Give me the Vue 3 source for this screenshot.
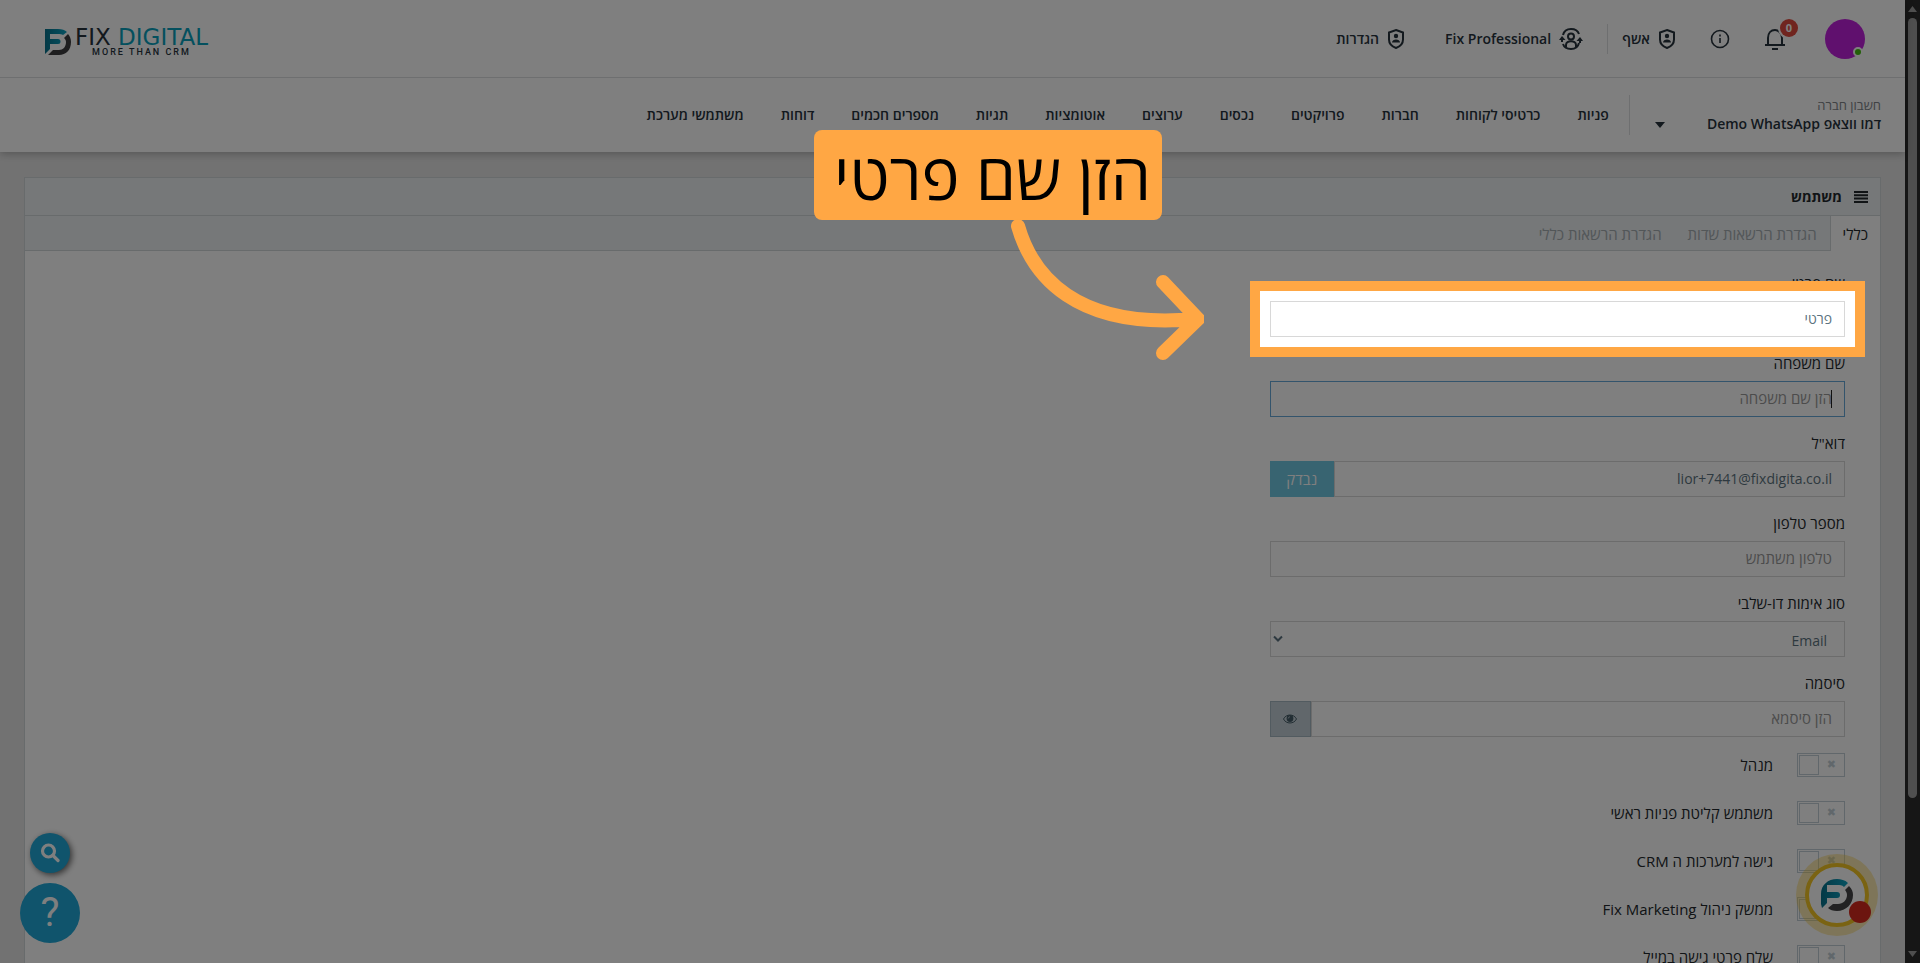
<template>
  <div class="window" dir="rtl">
    <div class="scrollbar">
      <svg width="9" height="6" viewBox="0 0 9 6"><path d="M4.500 0L9 6H0z" fill="currentColor" /></svg>
      <span class="thumb"></span>
      <svg class="down" width="9" height="6" viewBox="0 0 9 6"><path d="M0 0h9L4.500 6z" fill="currentColor" /></svg>
    </div>

    <div class="page">
      <header class="topbar">
        <div class="top-row">
          <div class="top-actions">
            <button class="avatar" aria-label="פרופיל"><span class="status"></span></button>
            <button class="icon-btn bell" aria-label="התראות">
              <svg width="22" height="24" viewBox="0 0 22 24" fill="none" stroke="currentColor" stroke-width="2">
                <path d="M1 18h20M4 18v-7c0-5 3-8 7-8 3 0 7 3 7 8v7M8 22h6" />
              </svg>
              <span class="count">0</span>
            </button>
            <button class="icon-btn info" aria-label="מידע">
              <svg width="20" height="20" viewBox="0 0 20 20" fill="none" stroke="currentColor" stroke-width="1.600">
                <circle cx="10" cy="10" r="8.500" />
                <path d="M10 9v5M10 5.500v2" />
              </svg>
            </button>
            <a class="top-link wizard" href="#">
              <svg class="shield" viewBox="0 0 18 22"><path class="line" d="M9 2l7 2.500v7c0 4-3 7-7 8.500-4-1.500-7-4.500-7-8.500v-7z" /><circle cx="9" cy="8" r="2.200" /><path d="M5 14.500c0-4 8-4 8 0z" /></svg>
              אשף
            </a>
            <span class="divider"></span>
            <a class="top-link pro" href="#">
              <svg width="24" height="22" viewBox="0 0 24 22" fill="none" stroke="currentColor" stroke-width="2">
                <path d="M4 7c1-4 4-6 8-6 4 0 7 2 8 5M20 15c-1 4-4 6-8 6-4 0-7-2-8-5" />
                <circle cx="12" cy="8.500" r="3" />
                <path d="M7 19v-2c0-5 10-5 10 0v2" />
                <path d="M0 12l3-4 3.500 4zM17.500 13l3.500-4 3 4z" fill="currentColor" stroke="none" />
                <path d="M3 11v3M21 11v4" />
              </svg>
              Fix Professional
            </a>
            <a class="top-link" href="#">
              <svg class="shield" viewBox="0 0 18 22"><path class="line" d="M9 2l7 2.500v7c0 4-3 7-7 8.500-4-1.500-7-4.500-7-8.500v-7z" /><circle cx="9" cy="8" r="2.200" /><path d="M5 14.500c0-4 8-4 8 0z" /></svg>
              הגדרות
            </a>
          </div>
          <a class="logo" href="#" dir="ltr">
            <svg width="26" height="26" viewBox="0 0 26 26">
              <defs>
                <linearGradient id="teal" x1="0" x2="1"><stop offset="0" stop-color="#08728c" /><stop offset="1" stop-color="#0da5c4" /></linearGradient>
              </defs>
              <path fill="url(#teal)" d="M0 0h13c4 0 7 1 9 3l-4 3c-1-1-3-1-5-1H5v5h8a2.500 2.500 0 0 1 0 5H5v5l-5 5z" />
              <path fill="#3c3c3e" d="M23 5c2 2 3 5 3 8 0 8-5 13-12 13H3l5-5h6c4 0 7-3 7-8 0-2-1-3-2-4z" />
            </svg>
            <span class="logo-text">
              <span class="logo-name">FIX <b>DIGITAL</b></span>
              <span class="logo-tag">MORE THAN CRM</span>
            </span>
          </a>
        </div>
        <div class="nav-row">
          <button class="account">
            <span class="account-text">
              <small>חשבון חברה</small>
              <span>דמו ווצאפ Demo WhatsApp</span>
            </span>
            <svg width="10" height="6" viewBox="0 0 10 6"><path d="M0 0h10L5 6z" fill="currentColor" /></svg>
          </button>
          <nav>
            <a v-for="item in navItems" :key="item" href="#">{{ item }}</a>
          </nav>
        </div>
      </header>

      <main class="card">
        <div class="card-header">
          <svg width="14" height="12" viewBox="0 0 14 12"><path d="M0 1h14M0 4.300h14M0 7.600h14M0 11h14" stroke="currentColor" stroke-width="2" /></svg>
          <h1>משתמש</h1>
        </div>
        <div class="tabs">
          <button v-for="tab in tabs" :key="tab" :class="{ active: tab === activeTab }" @click="activeTab = tab">{{ tab }}</button>
        </div>
        <form class="card-body" @submit.prevent>
          <div class="form-group">
            <label for="first">שם פרטי</label>
            <div class="control">
              <input id="first" v-model="form.first" type="text">
              <div class="spotlight"></div>
              <div class="callout">הזן שם פרטי</div>
              <svg class="arrow" width="200" height="150" viewBox="0 0 200 150">
                <path d="M14 14C28 63 71 118 191 107M159 70l35 37-35 34" />
              </svg>
            </div>
          </div>
          <div class="form-group">
            <label for="last">שם משפחה</label>
            <div class="control focused">
              <input id="last" v-model="form.last" type="text" placeholder="הזן שם משפחה">
              <span class="cursor"></span>
            </div>
          </div>
          <div class="form-group">
            <label for="email">דוא"ל</label>
            <div class="control">
              <input id="email" v-model="form.email" type="text">
              <button class="check" type="button">נבדק</button>
            </div>
          </div>
          <div class="form-group">
            <label for="phone">מספר טלפון</label>
            <div class="control">
              <input id="phone" v-model="form.phone" type="text" placeholder="טלפון משתמש">
            </div>
          </div>
          <div class="form-group">
            <label for="auth">סוג אימות דו-שלבי</label>
            <div class="control">
              <select id="auth" v-model="form.auth">
                <option>Email</option>
              </select>
              <svg class="chevron" width="10" height="8" viewBox="0 0 10 8"><path d="M1 1.500l4 4 4-4" fill="none" stroke="currentColor" stroke-width="2" /></svg>
            </div>
          </div>
          <div class="form-group">
            <label for="password">סיסמה</label>
            <div class="control">
              <input id="password" v-model="form.password" type="password" placeholder="הזן סיסמא">
              <button class="eye" type="button" aria-label="הצג סיסמה">
                <svg width="14" height="10" viewBox="0 0 14 10"><path d="M.5 5C3-.3 11-.3 13.500 5 11 10.300 3 10.300.5 5z" fill="none" stroke="currentColor" /><circle cx="7" cy="4.500" r="3.400" fill="currentColor" /><path d="M5.200 4.500A2 2 0 0 1 7 2.700" fill="none" stroke="#c2cfd6" stroke-width=".8" /></svg>
              </button>
            </div>
          </div>
          <label v-for="item in switches" :key="item.label" class="switch-row">
            <input v-model="item.on" type="checkbox">
            <span class="switch">
              <span class="mark">✖</span>
              <span class="handle"></span>
            </span>
            {{ item.label }}
          </label>
        </form>
      </main>

      <button class="fab search" aria-label="חיפוש">
        <svg width="20" height="20" viewBox="0 0 20 20" fill="none" stroke="currentColor" stroke-width="3.200"><circle cx="8.500" cy="8" r="6" /><path d="M13 12.500l5 5" stroke-linecap="round" /></svg>
      </button>
      <button class="fab help">?</button>
      <button class="chat" aria-label="צ'אט">
        <svg width="34" height="34" viewBox="0 0 34 34">
          <path fill="url(#teal)" d="M1 26V16C1 7 8 1 17 1c4 0 8 1 11 4l-4 4c-2-2-4-2-7-2H7v7h10a3 3 0 0 1 0 6H7v5l-5 5z" />
          <path fill="#444446" d="M29 8c3 3 4 6 4 9 0 9-7 16-16 16-4 0-7-1-9-3l5-4h5c5 0 9-4 9-9 0-2-1-4-2-5z" />
        </svg>
        <span class="dot"></span>
      </button>
    </div>
  </div>
</template>

<script setup>
import { reactive, ref } from 'vue'

const navItems = [
  'פניות', 'כרטיסי לקוחות', 'חברות', 'פרויקטים', 'נכסים', 'ערוצים',
  'אוטומציות', 'תגיות', 'מספרים חכמים', 'דוחות', 'משתמשי מערכת'
]

const tabs = ['כללי', 'הגדרת הרשאות שדות', 'הגדרת הרשאות כללי']
const activeTab = ref('כללי')

const form = reactive({
  first: 'פרטי',
  last: '',
  email: 'lior+7441@fixdigita.co.il',
  phone: '',
  auth: 'Email',
  password: ''
})

const switches = reactive([
  { label: 'מנהל', on: false },
  { label: 'משתמש קליטת פניות ראשי', on: false },
  { label: 'גישה למערכות ה CRM', on: false },
  { label: 'ממשק ניהול Fix Marketing', on: false },
  { label: 'שלח פרטי גישה במייל', on: false }
])
</script>

<style>
body {
  margin: 0;
  overflow: hidden;
}
</style>

<style scoped>
* {
  box-sizing: border-box;
}

.window {
  position: relative;
  display: flex;
  height: 100vh;
  overflow: hidden;
  background: #e5e5e5;
  color: #23282c;
  font: 15px/20px "Open Sans", "Noto Sans", sans-serif;
}

button {
  padding: 0;
  border: 0;
  background: none;
  color: inherit;
  font: inherit;
  cursor: pointer;
}

a {
  color: inherit;
  text-decoration: none;
}

svg {
  display: block;
  flex: none;
}

.page {
  flex: 1;
  min-width: 0;
}

.topbar {
  background: #fff;
  box-shadow: 0 2px 8px rgba(0, 0, 0, 0.25);
  color: #26323c;
  font-size: 14px;
  font-weight: 600;
}

.top-row {
  display: flex;
  align-items: center;
  justify-content: space-between;
  height: 78px;
  padding: 0 40px 0 45px;
  border-bottom: 1px solid #dcdfe1;
}

.top-actions {
  display: flex;
  align-items: center;
}

.avatar {
  position: relative;
  width: 40px;
  height: 40px;
  border-radius: 50%;
  background: #c020dc;
}

.status {
  position: absolute;
  right: 2px;
  bottom: 2px;
  width: 10px;
  height: 10px;
  border: 2px solid #fff;
  border-radius: 50%;
  background: #44c010;
}

.icon-btn {
  position: relative;
}

.bell {
  margin-right: 39px;
}

.count {
  position: absolute;
  top: -8px;
  left: 16px;
  width: 18px;
  height: 18px;
  border-radius: 50%;
  background: #e04a3e;
  box-shadow: 0 0 0 2px #fff;
  color: #fff;
  font-size: 11px;
  font-weight: 700;
  line-height: 18px;
}

.info {
  margin-right: 34px;
}

.top-link {
  display: flex;
  align-items: center;
  gap: 8px;
}

.wizard {
  margin-right: 34px;
}

.shield {
  width: 18px;
  height: 22px;
  fill: currentColor;
}

.shield .line {
  fill: none;
  stroke: currentColor;
  stroke-width: 2;
}

.divider {
  width: 1px;
  height: 30px;
  margin: 0 14px 0 24px;
  background: #dcdfe1;
}

.pro {
  margin-left: 40px;
}

.logo {
  display: flex;
  align-items: center;
  gap: 4px;
  margin-top: 6px;
}

.logo-text {
  display: flex;
  flex-direction: column;
  align-items: center;
  font-family: "DejaVu Sans", sans-serif;
  font-weight: 400;
}

.logo-name {
  font-size: 23px;
  line-height: 20px;
}

.logo-name b {
  color: #08a0bd;
  font-weight: 400;
}

.logo-tag {
  font: 500 9px/10px Roboto, sans-serif;
  letter-spacing: 2px;
}

.nav-row {
  display: flex;
  align-items: center;
  height: 74px;
  padding: 0 24px;
}

.account {
  display: flex;
  align-items: center;
  gap: 42px;
  height: 40px;
  padding-left: 25px;
  border-left: 1px solid #dcdfe1;
  text-align: right;
}

.account-text {
  display: flex;
  flex-direction: column;
}

.account small {
  color: #808488;
  font-size: 13px;
  font-weight: 400;
  line-height: 18px;
}

.account svg {
  margin-top: 20px;
}

nav {
  display: flex;
  gap: 37px;
  padding-right: 20px;
}

.card {
  margin: 25px 24px 0;
  border: 1px solid #d0d6d9;
  background: #fff;
}

.card-header {
  display: flex;
  align-items: center;
  gap: 12px;
  height: 38px;
  padding: 0 12px;
  border-bottom: 1px solid #d0d6d9;
  background: #ecf0f3;
}

.card-header h1 {
  margin: 0;
  font-size: 14px;
  font-weight: 700;
}

.tabs {
  display: flex;
  height: 35px;
  background: #ecf0f3;
  box-shadow: inset 0 -1px #d0d6d9;
}

.tabs button {
  padding: 0 13px;
  color: #a4acb0;
}

.tabs .active {
  padding: 0 12px;
  border-left: 1px solid #d0d6d9;
  background: #fff;
  color: #23282c;
}

.card-body {
  width: 33.33%;
  padding: 22px 35px 0 8px;
}

.form-group {
  margin-bottom: 16px;
}

.form-group label {
  display: block;
  margin-bottom: 8px;
}

.control {
  position: relative;
  display: flex;
  height: 36px;
}

.control input,
.control select {
  flex: 1;
  min-width: 0;
  padding: 0 12px;
  border: 1px solid #d8d8d8;
  border-radius: 0;
  outline: 0;
  background: #fff;
  color: #5c7380;
  font: inherit;
  font-size: 14px;
}

.control input::placeholder {
  color: #999;
  font-size: 15px;
  opacity: 1;
}

.control select {
  padding: 4px 17px 0;
  appearance: none;
}

.control.focused input {
  border-color: #66a8d8;
}

.cursor {
  position: absolute;
  top: 9px;
  right: 13px;
  width: 1px;
  height: 18px;
  background: #222;
}

.check {
  width: 64px;
  background: #70c8e2;
  color: #fff;
}

.chevron {
  position: absolute;
  top: 14px;
  left: 3px;
  color: #5c7380;
}

.eye {
  display: flex;
  align-items: center;
  justify-content: center;
  width: 41px;
  border: 1px solid #a4b7c1;
  background: #c2cfd6;
  color: #455c68;
}

.switch-row {
  position: relative;
  display: flex;
  align-items: center;
  gap: 24px;
  height: 24px;
  margin-bottom: 24px;
}

.switch-row input {
  position: absolute;
  opacity: 0;
}

.switch {
  display: flex;
  align-items: center;
  justify-content: space-between;
  width: 48px;
  height: 24px;
  padding: 0 8px 0 1px;
  border: 1px solid #c2cfd6;
}

.mark {
  color: #c2cfd6;
  font: 11px/12px "DejaVu Sans", sans-serif;
}

.handle {
  width: 20px;
  height: 20px;
  border: 1px solid #c2cfd6;
}

/* tour step */
.spotlight {
  position: absolute;
  z-index: 10;
  inset: -20px;
  border: 10px solid #ffa744;
  box-shadow: 0 0 0 3000px rgba(0, 0, 0, 0.5);
  pointer-events: none;
}

.callout {
  position: absolute;
  z-index: 11;
  right: 683px;
  bottom: 117px;
  height: 90px;
  padding: 0 11px 0 20px;
  border-radius: 8px;
  background: #ffa744;
  color: #000;
  font-size: 64px;
  line-height: 92px;
  white-space: nowrap;
}

.arrow {
  position: absolute;
  z-index: 11;
  right: 641px;
  top: -89px;
  fill: none;
  stroke: #ffa744;
  stroke-width: 14;
  stroke-linecap: round;
  stroke-linejoin: round;
}

.fab {
  position: absolute;
  display: flex;
  align-items: center;
  justify-content: center;
  border-radius: 50%;
  background: #20a8d8;
  color: #fff;
}

.search {
  left: 30px;
  bottom: 90px;
  width: 40px;
  height: 40px;
  box-shadow: 2px 2px 6px rgba(0, 0, 0, 0.6);
}

.help {
  left: 20px;
  bottom: 20px;
  width: 60px;
  height: 60px;
  font: 40px/60px Roboto, sans-serif;
}

.chat {
  position: absolute;
  right: 51px;
  bottom: 36px;
  display: flex;
  align-items: center;
  justify-content: center;
  width: 64px;
  height: 64px;
  border: 4px solid #f5c624;
  border-radius: 50%;
  background: #fff;
  box-shadow: 0 0 0 9px rgba(245, 198, 36, 0.35);
}

.dot {
  position: absolute;
  right: -6px;
  bottom: 0;
  width: 22px;
  height: 22px;
  border-radius: 50%;
  background: #d82a1e;
}

.scrollbar {
  display: flex;
  flex-direction: column;
  align-items: center;
  width: 15px;
  padding: 6px 0;
  background: #2c2c2c;
  color: #9f9f9f;
}

.thumb {
  width: 9px;
  height: 82%;
  margin-top: 6px;
  border-radius: 5px;
  background: #9f9f9f;
}

.down {
  margin-top: auto;
}
</style>
